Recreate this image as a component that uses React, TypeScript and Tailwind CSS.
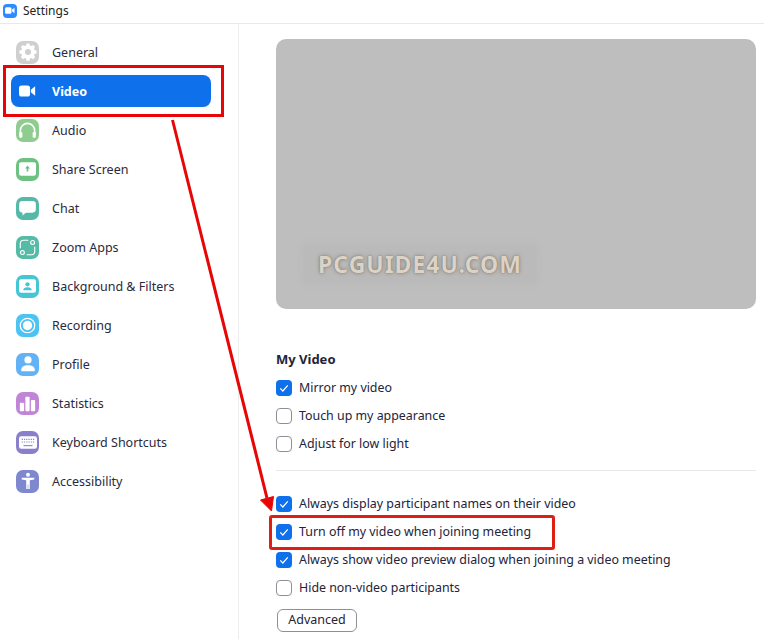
import React from 'react';

const font = { fontFamily: '"Noto Sans", "Open Sans", sans-serif' };

const GearIcon = () => (
  <svg viewBox="0 0 24 24" className="h-[18px] w-[18px]" fill="#fff">
    <path d="M10 2h4l.6 2.800 1.700.7 2.400-1.500 2.800 2.800-1.500 2.400.7 1.700 2.800.6v4l-2.800.6-.7 1.700 1.500 2.400-2.800 2.800-2.400-1.500-1.700.7L14 25h-4l-.6-2.800-1.700-.7-2.400 1.500-2.800-2.800 1.500-2.400-.7-1.700-2.800-.6v-4l2.800-.6.7-1.700-1.500-2.400 2.800-2.800 2.400 1.500 1.700-.7z" transform="translate(0 -1.500)" />
    <circle cx="12" cy="12" r="4" fill="#cfcfcf" />
  </svg>
);

const VideoIcon = () => (
  <svg viewBox="0 0 20 14" className="h-[12px] w-[17px]" fill="#fff">
    <rect x="0" y="0.500" width="13" height="13" rx="3" />
    <path d="M14 5.500 19 1.500v11l-5-4z" />
  </svg>
);

const HeadphonesIcon = () => (
  <svg viewBox="0 0 24 24" className="h-[19px] w-[19px]" fill="none" stroke="#fff" strokeWidth="2">
    <path d="M3 17v-5a9 9 0 0 1 18 0v5" />
    <rect x="1.500" y="14" width="4" height="7" rx="1.500" fill="#fff" stroke="none" />
    <rect x="18.500" y="14" width="4" height="7" rx="1.500" fill="#fff" stroke="none" />
  </svg>
);

const ShareIcon = () => (
  <svg viewBox="0 0 20 16" className="h-[14px] w-[17px]">
    <rect x="0" y="0" width="20" height="16" rx="2.500" fill="#fff" />
    <path d="M10 4 13 7.500h-2V11H9V7.500H7z" fill="#6fc182" />
  </svg>
);

const ChatIcon = () => (
  <svg viewBox="0 0 20 18" className="h-[15px] w-[17px]" fill="#fff">
    <path d="M4 0h12a4 4 0 0 1 4 4v6a4 4 0 0 1-4 4H8l-4 3.500V14a4 4 0 0 1-4-4V4a4 4 0 0 1 4-4z" />
  </svg>
);

const AppsIcon = () => (
  <svg viewBox="0 0 20 20" className="h-[17px] w-[17px]" fill="none" stroke="#fff" strokeWidth="1.300">
    <path d="M11 1.500H5A3.500 3.500 0 0 0 1.500 5v6M9 18.500h6a3.500 3.500 0 0 0 3.500-3.500V9" />
    <circle cx="16" cy="4" r="2.300" />
    <circle cx="4" cy="16" r="2.300" />
  </svg>
);

const BackgroundIcon = () => (
  <svg viewBox="0 0 20 16" className="h-[14px] w-[17px]">
    <rect x="0" y="0" width="20" height="16" rx="2.500" fill="#fff" />
    <circle cx="10" cy="6" r="2.500" fill="#45c6d6" />
    <path d="M5 13c0-2.500 2-3.500 5-3.500s5 1 5 3.500z" fill="#45c6d6" />
  </svg>
);

const RecordIcon = () => (
  <svg viewBox="0 0 20 20" className="h-[17px] w-[17px]">
    <circle cx="10" cy="10" r="8.500" fill="none" stroke="#fff" strokeWidth="1.500" />
    <circle cx="10" cy="10" r="5.500" fill="#fff" />
  </svg>
);

const ProfileIcon = () => (
  <svg viewBox="0 0 20 20" className="h-[18px] w-[18px]" fill="#fff">
    <circle cx="10" cy="5.500" r="4" />
    <path d="M2.500 18v-1.500C2.500 13 6 11.500 10 11.500s7.500 1.500 7.500 5V18z" />
  </svg>
);

const StatsIcon = () => (
  <svg viewBox="0 0 20 20" className="h-[17px] w-[17px]" fill="#fff">
    <rect x="1" y="9" width="5" height="10" rx="1" />
    <rect x="7.500" y="2" width="5" height="17" rx="1" />
    <rect x="14" y="6" width="5" height="13" rx="1" />
  </svg>
);

const KeyboardIcon = () => (
  <svg viewBox="0 0 20 14" className="h-[13px] w-[18px]">
    <rect width="20" height="14" rx="2.500" fill="#fff" />
    <path d="M3 3.500h14M3 6.500h14" stroke="#8a7fcb" strokeWidth="1.200" strokeDasharray="1.300 1.200" />
    <path d="M5 10.500h10" stroke="#8a7fcb" strokeWidth="1.200" />
  </svg>
);

const AccessIcon = () => (
  <svg viewBox="0 0 20 20" className="h-[18px] w-[18px]" fill="#fff">
    <circle cx="10" cy="3" r="2.200" />
    <path d="M3 6.500h14v1.800l-5 1V19h-1.700v-5h-.6v5H8V9.300l-5-1z" />
  </svg>
);

const navItems = [
  { label: 'General', bg: 'bg-[#cfcfcf]', icon: <GearIcon /> },
  { label: 'Video', bg: '', icon: <VideoIcon />, active: true },
  { label: 'Audio', bg: 'bg-[#8fcc8f]', icon: <HeadphonesIcon /> },
  { label: 'Share Screen', bg: 'bg-[#6fc182]', icon: <ShareIcon /> },
  { label: 'Chat', bg: 'bg-[#55b9a8]', icon: <ChatIcon /> },
  { label: 'Zoom Apps', bg: 'bg-[#55bba6]', icon: <AppsIcon /> },
  { label: 'Background & Filters', bg: 'bg-[#45c6d6]', icon: <BackgroundIcon /> },
  { label: 'Recording', bg: 'bg-[#4cc3f1]', icon: <RecordIcon /> },
  { label: 'Profile', bg: 'bg-[#62b3f6]', icon: <ProfileIcon /> },
  { label: 'Statistics', bg: 'bg-[#c085d6]', icon: <StatsIcon /> },
  { label: 'Keyboard Shortcuts', bg: 'bg-[#8a7fcb]', icon: <KeyboardIcon /> },
  { label: 'Accessibility', bg: 'bg-[#7d88cf]', icon: <AccessIcon /> },
];

const Check = ({ label, checked }: { label: string; checked?: boolean }) => (
  <div className="flex h-7 items-center gap-[7px]">
    {checked ? (
      <span className="flex h-4 w-4 items-center justify-center rounded-[4px] bg-[#0e71eb]">
        <svg viewBox="0 0 16 16" className="h-3 w-3" fill="none" stroke="#fff" strokeWidth="1.600">
          <path d="M3 8.500 6.500 12 13 4.500" />
        </svg>
      </span>
    ) : (
      <span className="h-4 w-4 rounded-[4px] border border-[#8f8f98] bg-white" />
    )}
    <span className="text-[12.400px] text-[#23233a]">{label}</span>
  </div>
);

export default function App() {
  return (
    <div style={font} className="relative h-[639px] w-[764px] overflow-hidden bg-white">
      <div className="flex h-6 items-center gap-[6px] border-b border-[#e8e8e8] pb-[2px] pl-[3px]">
        <span className="flex h-[14px] w-[14px] items-center justify-center rounded-[4px] bg-[#2d8cff]">
          <svg viewBox="0 0 20 14" className="h-[7px] w-[10px]" fill="#fff">
            <rect x="0" y="0.500" width="13" height="13" rx="3" />
            <path d="M14 5.500 19 1.500v11l-5-4z" />
          </svg>
        </span>
        <span className="text-[12px] text-[#222]">Settings</span>
      </div>

      <div className="flex h-[615px]">
        <aside className="w-[239px] shrink-0 border-r border-[#ededed] pt-[12px]">
          {navItems.map((item) => (
            <div
              key={item.label}
              className={`ml-[11px] mb-[7px] flex h-[32px] w-[200px] items-center rounded-[8px] ${
                item.active ? 'bg-[#0e71eb]' : ''
              }`}
            >
              <span
                className={`ml-[5px] flex h-[23px] w-[23px] items-center justify-center rounded-[7px] ${item.bg}`}
              >
                {item.icon}
              </span>
              <span
                className={`ml-[13px] pt-[2px] text-[12.500px] ${
                  item.active ? 'font-bold text-white' : 'text-[#2a2a3c]'
                }`}
              >
                {item.label}
              </span>
            </div>
          ))}
        </aside>

        <main className="flex-1 pl-[37px] pr-2 pt-[15px]">
          <div className="flex h-[270px] w-[480px] items-end rounded-[10px] bg-[#bebebe]">
            <div className="mb-[26px] ml-[28px] flex h-[38px] w-[232px] items-center justify-center bg-[#bababa] text-[23px] font-bold tracking-[1px] text-[#dcd3c8] shadow-[0_0_6px_2px_#bababa] [text-shadow:0_0_1px_#6f675c,0_0_4px_#8c8478]">
              PCGUIDE4U.COM
            </div>
          </div>

          <h2 className="mt-[41px] text-[13px] font-bold leading-[18px] text-[#23233a]">My Video</h2>
          <div className="mt-[6px]">
            <Check label="Mirror my video" checked />
            <Check label="Touch up my appearance" />
            <Check label="Adjust for low light" />
          </div>
          <div className="mt-[12px] h-px bg-[#e8e8e8]" />
          <div className="mt-[19px]">
            <Check label="Always display participant names on their video" checked />
            <Check label="Turn off my video when joining meeting" checked />
            <Check label="Always show video preview dialog when joining a video meeting" checked />
            <Check label="Hide non-video participants" />
          </div>
          <button className="ml-px mt-[7px] flex h-[23px] w-[80px] items-center justify-center rounded-[6px] border border-[#8f8f98] text-[12.500px] text-[#23233a]">
            Advanced
          </button>
        </main>
      </div>

      {/* annotations drawn on top of the screenshot */}
      <div className="absolute left-[3px] top-[65px] h-[52px] w-[221px] border-[3px] border-[#e80505]" />
      <div className="absolute left-[269px] top-[515px] h-[35px] w-[286px] rounded-[3px] border-[3px] border-[#dd1f14]" />
      <svg className="absolute left-0 top-0" width="764" height="639" fill="none">
        <path d="M172.500 120 267 498" stroke="#e80505" strokeWidth="3" />
        <path d="M260.500 500 273.500 496.500 271.500 511z" fill="#e80505" stroke="#e80505" strokeWidth="1" />
      </svg>
    </div>
  );
}
